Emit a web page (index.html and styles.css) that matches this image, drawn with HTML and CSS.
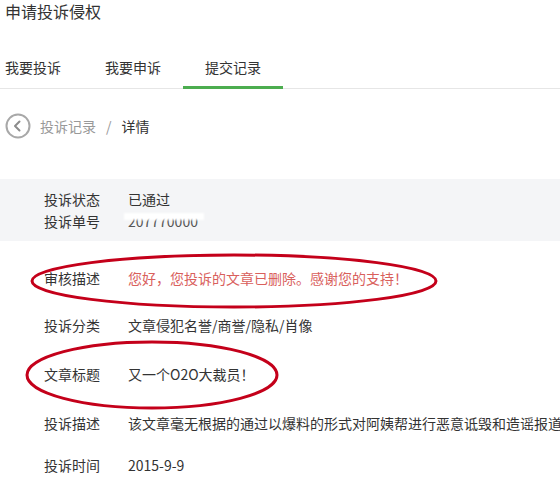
FILE: index.html
```html
<!DOCTYPE html>
<html lang="zh-CN">
<head>
    <meta charset="UTF-8">
    <meta name="viewport" content="width=device-width, initial-scale=1.0">
    <title>申请投诉侵权</title>
    <link rel="stylesheet" href="styles.css">
</head>
<body>
    <div class="page">
        <header class="page-title">申请投诉侵权</header>

        <nav class="tabs">
            <a href="#complain" class="tab">我要投诉</a>
            <a href="#appeal" class="tab">我要申诉</a>
            <a href="#records" class="tab active">提交记录</a>
        </nav>

        <div class="crumbs">
            <a href="#back" class="back-btn">
                <svg width="26" height="26" viewBox="0 0 26 26">
                    <circle cx="13" cy="13" r="11.5" fill="none" stroke="#a8a8a8" stroke-width="2"/>
                    <path d="M14.5 8.5 L10 13 L14.5 17.5" fill="none" stroke="#8c8c8c" stroke-width="2" stroke-linecap="round" stroke-linejoin="round"/>
                </svg>
            </a>
            <span class="crumb-link">投诉记录</span>
            <span class="crumb-sep">/</span>
            <span class="crumb-current">详情</span>
        </div>

        <section class="summary">
            <div class="row">
                <span class="label">投诉状态</span>
                <span class="value">已通过</span>
            </div>
            <div class="row">
                <span class="label">投诉单号</span>
                <span class="value number">207770000</span>
            </div>
        </section>

        <section class="details">
            <div class="row">
                <span class="label">审核描述</span>
                <span class="value notice">您好，您投诉的文章已删除。感谢您的支持！</span>
            </div>
            <div class="row">
                <span class="label">投诉分类</span>
                <span class="value">文章侵犯名誉/商誉/隐私/肖像</span>
            </div>
            <div class="row spaced">
                <span class="label">文章标题</span>
                <span class="value">又一个O2O大裁员！</span>
            </div>
            <div class="row spaced">
                <span class="label">投诉描述</span>
                <span class="value">该文章毫无根据的通过以爆料的形式对阿姨帮进行恶意诋毁和造谣报道</span>
            </div>
            <div class="row tight">
                <span class="label">投诉时间</span>
                <span class="value">2015-9-9</span>
            </div>
        </section>

        <!-- red marks drawn over the screenshot -->
        <svg class="marks" width="560" height="493" viewBox="0 0 560 493">
            <ellipse cx="234" cy="281" rx="202" ry="26" fill="none" stroke="#c4001a" stroke-width="3"/>
            <ellipse cx="152" cy="375" rx="125" ry="33" fill="none" stroke="#c4001a" stroke-width="3"/>
        </svg>
    </div>
</body>
</html>
```

FILE: styles.css
```css
body {
    margin: 0;
    padding: 0;
    background: #fff;
    color: #333;
    font-family: "Noto Sans CJK SC", "Noto Sans", sans-serif;
    font-size: 14px;
    overflow: hidden;
}

.page {
    position: relative;
    width: 560px;
    height: 493px;
    overflow: hidden;
}

.page-title {
    padding-left: 5px;
    font-size: 16px;
    line-height: 22px;
    color: #333;
}

.tabs {
    display: flex;
    margin-top: 24px;
    border-bottom: 1px solid #e6e6e6;
}

.tab {
    padding: 11px 22px 9px;
    line-height: 20px;
    color: #333;
    text-decoration: none;
    border-bottom: 3px solid transparent;
    margin-bottom: -1px;
}

.tab:first-child {
    padding-left: 5px;
}

.tab.active {
    border-bottom-color: #4cad4f;
}

.crumbs {
    display: flex;
    align-items: center;
    padding: 24px 0 0 5px;
    line-height: 26px;
}

.back-btn {
    display: flex;
    margin-right: 9px;
}

.crumb-link {
    color: #999;
}

.crumb-sep {
    color: #999;
    margin: 0 10px;
}

.crumb-current {
    color: #333;
}

.summary {
    margin-top: 40px;
    padding: 9px 0;
    background: #f4f5f7;
}

.row {
    display: flex;
    padding-left: 44px;
    line-height: 22px;
    white-space: nowrap;
}

.label {
    width: 84px;
    flex-shrink: 0;
}

.value.notice {
    color: #d9605c;
}

.value.number {
    position: relative;
    color: #555;
}

.value.number::after {
    content: "";
    position: absolute;
    left: -4px;
    top: 3px;
    width: 80px;
    height: 7px;
    background: #fff;
    filter: blur(1px);
}

.details {
    display: flex;
    flex-direction: column;
    gap: 25px;
    padding-top: 26px;
}

.details .row.spaced {
    margin-top: 2px;
}

.details .row.tight {
    margin-top: -5px;
}

.marks {
    position: absolute;
    left: 0;
    top: 0;
    pointer-events: none;
}
```
